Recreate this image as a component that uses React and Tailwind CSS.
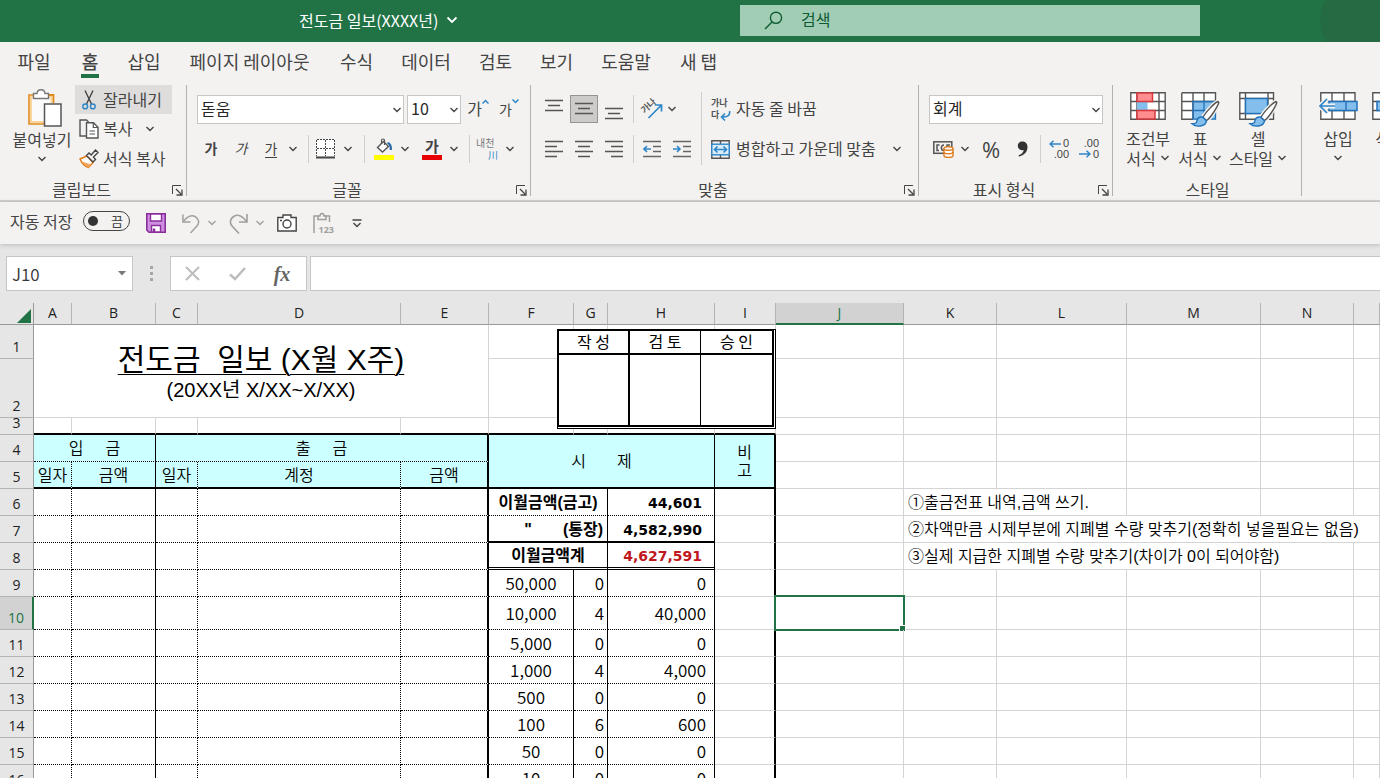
import React from 'react'

const TABS = [
  { label: '파일', width: 'w-[62px]' },
  { label: '홈', width: 'w-[50px]', active: true },
  { label: '삽입', width: 'w-[58px]' },
  { label: '페이지 레이아웃', width: 'w-[153px]' },
  { label: '수식', width: 'w-[61px]' },
  { label: '데이터', width: 'w-[78px]' },
  { label: '검토', width: 'w-[61px]' },
  { label: '보기', width: 'w-[61px]' },
  { label: '도움말', width: 'w-[78px]' },
  { label: '새 탭', width: 'w-[67px]' },
]

const COLUMNS = [
  { name: 'A', width: 'w-[38px]' },
  { name: 'B', width: 'w-[84px]' },
  { name: 'C', width: 'w-[42px]' },
  { name: 'D', width: 'w-[203px]' },
  { name: 'E', width: 'w-[88px]' },
  { name: 'F', width: 'w-[85px]' },
  { name: 'G', width: 'w-[34px]' },
  { name: 'H', width: 'w-[107px]' },
  { name: 'I', width: 'w-[61px]' },
  { name: 'J', width: 'w-[128px]' },
  { name: 'K', width: 'w-[93px]' },
  { name: 'L', width: 'w-[130px]' },
  { name: 'M', width: 'w-[134px]' },
  { name: 'N', width: 'w-[93px]' },
  { name: '', width: '' },
]

const CASH_ROWS = [
  { row: 9, unit: '50,000', count: '0', sum: '0' },
  { row: 10, unit: '10,000', count: '4', sum: '40,000' },
  { row: 11, unit: '5,000', count: '0', sum: '0' },
  { row: 12, unit: '1,000', count: '4', sum: '4,000' },
  { row: 13, unit: '500', count: '0', sum: '0' },
  { row: 14, unit: '100', count: '6', sum: '600' },
  { row: 15, unit: '50', count: '0', sum: '0' },
  { row: 16, unit: '10', count: '0', sum: '0' },
]

// cell borders
const GRID = 'border-r border-b border-[#d4d4d4]'
const DOTTED = 'border-r border-b border-dotted border-black'
const DOTTED_SOLID = 'border-r border-b border-black [border-bottom-style:dotted]'
const DOTTED_THICK = 'border-r-2 border-b border-black [border-bottom-style:dotted]'
const REMARK = 'border-r-2 border-b border-r-black border-b-[#d4d4d4]'

const AMOUNT = "pr-3 text-right font-['DejaVu_Sans'] text-[14px] font-bold"
const FIGURE = "font-['Noto_Sans_CJK_KR',sans-serif] text-[17px] font-[350] leading-[18px]"

const Chevron = ({ className = 'text-[#444]' }) => (
  <svg width="10" height="6" viewBox="0 0 10 6" className={`shrink-0 ${className}`} aria-hidden="true">
    <path d="M1.5 1 L5 4.5 L8.5 1" fill="none" stroke="currentColor" strokeWidth="1.4" />
  </svg>
)

const Drop = ({ width, label, className }) => (
  <button type="button" aria-label={label} className={`flex h-7 shrink-0 items-center justify-center ${width}`}>
    <Chevron className={className} />
  </button>
)

const Tool = ({ width, label, active, children }) => (
  <button
    type="button"
    aria-label={label}
    className={`flex h-7 shrink-0 items-center justify-center whitespace-nowrap ${width} ${
      active ? 'border border-[#979593] bg-[#cdcbc9]' : ''
    }`}
  >
    {children}
  </button>
)

const Sep = ({ className }) => <div className={`w-px shrink-0 bg-[#d0cecc] ${className}`} />

const Launcher = () => (
  <svg width="11" height="11" viewBox="0 0 11 11" fill="none" stroke="#444" aria-hidden="true">
    <path d="M0.5 9 V0.5 H9" />
    <path d="M4 4 L9 9 M10 4.5 V10 H4.5" strokeWidth="1.3" />
  </svg>
)

const Group = ({ width, label, launcher, children }) => (
  <section aria-label={label} className={`relative flex shrink-0 flex-col ${width}`}>
    <div className="flex h-[94px] items-start">{children}</div>
    <div className={`flex h-5 items-center justify-center leading-5 ${launcher ? 'pr-6' : ''}`}>
      <span>{label}</span>
    </div>
    {launcher && (
      <button type="button" aria-label={`${label} 설정`} className="absolute right-1 bottom-1">
        <Launcher />
      </button>
    )}
    <div className="absolute top-0 right-0 h-[111px] w-px bg-[#b3b1af]" />
  </section>
)

const PasteIcon = () => (
  <svg width="36" height="40" viewBox="0 0 36 40" fill="none">
    <path d="M3.5 6.5 H25.5 V35 H3.5 Z" fill="#fafafa" />
    <path d="M7 6 H2 V35 H17" stroke="#e08a1e" strokeWidth="1.6" />
    <path d="M7 8 H4 V33 H17 M20 8 H24.5 V14" stroke="#fbd49a" strokeWidth="2" />
    <path d="M21 6 H26.5 V14" stroke="#e08a1e" strokeWidth="1.8" />
    <path d="M6.5 9.5 V4.5 H10 C10.5 -0.5 17.5 -0.5 18 4.5 H21.5 V9.5 Z" fill="#fff" stroke="#777" strokeWidth="1.4" />
    <path d="M17.5 15 H34 V37 H17.5 Z" fill="#fff" stroke="#555" strokeWidth="1.5" />
  </svg>
)

const CutIcon = () => (
  <svg width="14" height="20" viewBox="0 0 14 20" fill="none">
    <path d="M3 0.5 L9.5 14 M11 0.5 L4.5 14" stroke="#444" strokeWidth="1.4" />
    <circle cx="3.2" cy="16.4" r="2.4" stroke="#2e86c8" strokeWidth="1.4" />
    <circle cx="10.8" cy="16.4" r="2.4" stroke="#2e86c8" strokeWidth="1.4" />
  </svg>
)

const CopyIcon = () => (
  <svg width="20" height="20" viewBox="0 0 20 20" fill="none" stroke="#555" strokeWidth="1.4">
    <path d="M7.5 17 H1 V1 H7.5 L9.5 3" />
    <path d="M7.5 3.8 H14.5 L19 8.3 V19 H7.5 Z" fill="#fff" />
    <path d="M14.3 4 V8.5 H19 M10.5 12 H16 M10.5 15 H16" strokeWidth="1.2" />
  </svg>
)

const BrushIcon = () => (
  <svg width="20" height="20" viewBox="0 0 20 20" fill="none">
    <path d="M1 10 L8 7 L14 13.5 L9.5 18.5 C6 17.5 2.5 13.5 1 10 Z" fill="#fff" stroke="#e07b1c" strokeWidth="1.5" />
    <path d="M3 12.5 L12 15.5 L9.5 18.5 C7 17.5 4.5 15.5 3 12.5 Z" fill="#f2a65a" />
    <path d="M7.5 6.5 L10 4 L12.2 6 L16.5 1 L19 3.5 L14.5 8 L16.5 10.5 L14 13 Z" fill="#f3f2f1" stroke="#444" strokeWidth="1.4" />
  </svg>
)

const BordersIcon = () => (
  <svg width="20" height="20" viewBox="0 0 20 20" fill="none" stroke="#444">
    <path d="M0.5 0.5 H18.5 V17 H0.5 Z" fill="#fff" stroke="none" />
    <path d="M1 0.5 H19 M0.5 1 V17 M9.5 1 V17 M18.5 1 V17 M1 9.5 H19" strokeDasharray="2 1" />
    <path d="M0 18.5 H19" strokeWidth="2" />
  </svg>
)

const FillIcon = () => (
  <svg width="20" height="22" viewBox="0 0 20 22" fill="none">
    <path d="M3.5 9.5 L9.5 3.5 L14.5 8.5 L8.5 14 Z" fill="#fff" stroke="#555" strokeWidth="1.4" />
    <path d="M7.5 6 V2.5 C7.5 0.5 10.5 0.5 10.5 2.5 V7" stroke="#555" strokeWidth="1.2" />
    <path d="M13.5 5 C17 5.5 17 9 16.8 12" stroke="#2468a8" strokeWidth="2.2" />
    <rect y="17" width="20" height="5" fill="#ffff00" />
  </svg>
)

const LINE_SHAPES = {
  top: 'M0 1.5 H18 M3 6.5 H15 M0 11.5 H18',
  middle: 'M0 4.5 H18 M3 9.5 H15 M0 14.5 H18',
  bottom: 'M0 9.5 H18 M3 14.5 H15 M0 19.5 H18',
  left: 'M0 2.5 H18 M0 7.5 H12 M0 12.5 H18 M0 17.5 H12',
  center: 'M0 2.5 H18 M3 7.5 H15 M0 12.5 H18 M3 17.5 H15',
  right: 'M0 2.5 H18 M6 7.5 H18 M0 12.5 H18 M6 17.5 H18',
}

const LinesIcon = ({ kind }) => (
  <svg width="18" height="21" viewBox="0 0 18 21" className="shrink-0">
    <path d={LINE_SHAPES[kind]} stroke="#555" strokeWidth="1.5" />
  </svg>
)

const IndentIcon = ({ more }) => (
  <svg width="18" height="20" viewBox="0 0 18 20" fill="none">
    <path d="M0 2.5 H18 M10 7.5 H18 M10 12.5 H18 M0 17.5 H18" stroke="#666" strokeWidth="1.5" />
    <path d={more ? 'M0 10 H7 M4 7 L7 10 L4 13' : 'M8 10 H1 M4 7 L1 10 L4 13'} stroke="#2e86c8" strokeWidth="1.6" />
  </svg>
)

const OrientationIcon = () => (
  <svg width="22" height="22" viewBox="0 0 22 22" fill="none" className="overflow-visible">
    <text x="2" y="14" fontSize="9" fontWeight="700" fill="#555" transform="rotate(-42 5 13)">가나</text>
    <path d="M7.5 20 L20 7.5 M14 7 H20.5 V13.5" stroke="#2e86c8" strokeWidth="1.7" />
  </svg>
)

const WrapIcon = () => (
  <span className="relative flex h-6 w-5 flex-col text-left text-[9px] leading-3 font-bold text-[#555]">
    <span>가나</span>
    <span>다</span>
    <svg width="11" height="10" viewBox="0 0 11 10" fill="none" className="absolute right-0 bottom-0">
      <path d="M9.5 0 C10.5 5 7 6 2 6 M5 2.5 L1.5 6 L5 9.5" stroke="#2e86c8" strokeWidth="1.6" />
    </svg>
  </span>
)

const MergeIcon = () => (
  <svg width="19" height="19" viewBox="0 0 19 19" fill="none">
    <path d="M0.8 0.8 H18.2 V18.2 H0.8 Z M9.5 1 V4 M9.5 15 V18" stroke="#555" strokeWidth="1.4" />
    <rect x="0.8" y="4.2" width="17.4" height="10.6" fill="#d9ecfa" stroke="#2e86c8" strokeWidth="1.4" />
    <path d="M3.5 9.5 H15.5 M6.5 6.5 L3.5 9.5 L6.5 12.5 M12.5 6.5 L15.5 9.5 L12.5 12.5" stroke="#2e86c8" strokeWidth="1.6" />
  </svg>
)

const CurrencyIcon = () => (
  <svg width="21" height="18" viewBox="0 0 21 18" fill="none">
    <rect x="0.8" y="1.8" width="18" height="11.5" stroke="#555" strokeWidth="1.5" />
    <path d="M6.5 5 H4 V10.5 H6 M11 5 C7.5 5 7.5 10.5 11 10.5 M14 8 V5 H17" stroke="#555" strokeWidth="1.5" />
    <path d="M11 8.5 V15.5 C11 18 20 18 20 15.5 V8.5" fill="#fff" stroke="#e07b1c" strokeWidth="1.4" />
    <ellipse cx="15.5" cy="8.5" rx="4.5" ry="1.8" fill="#fff" stroke="#e07b1c" strokeWidth="1.4" />
    <path d="M11 12 C11 14.3 20 14.3 20 12" stroke="#e07b1c" strokeWidth="1.4" />
  </svg>
)

const DecimalIcon = ({ more }) => (
  <span className="relative flex h-[22px] w-5 flex-col items-end font-['Liberation_Sans'] text-[11px] leading-[11px] text-[#444]">
    <span>{more ? '0' : '.00'}</span>
    <span>{more ? '.00' : '0'}</span>
    <svg
      width="12"
      height="8"
      viewBox="0 0 12 8"
      fill="none"
      className={more ? 'absolute top-0.5 left-0' : 'absolute bottom-0.5 left-0'}
    >
      <path
        d={more ? 'M12 4 H1 M4.5 0.8 L1 4 L4.5 7.2' : 'M0 4 H11 M7.5 0.8 L11 4 L7.5 7.2'}
        stroke="#2e86c8"
        strokeWidth="1.5"
      />
    </svg>
  </span>
)

const ConditionalIcon = () => (
  <svg width="36" height="28" viewBox="0 0 36 28">
    <path d="M0.8 0.8 H35.2 V27.2 H0.8 Z M7 1 V27 M29 1 V27 M1 9.5 H35 M1 18.5 H35" fill="#fff" stroke="#555" strokeWidth="1.4" />
    <rect x="7" y="9.5" width="10.5" height="9" fill="#83beec" />
    <path d="M7 1 H22.5 V9.5 H7 Z M7 18.5 H25 V27 H7 Z" fill="#ff8c8f" stroke="#d8373c" strokeWidth="1.5" />
  </svg>
)

const Paintbrush = () => (
  <g>
    <path d="M36.5 9.5 C33 11 24 21 22 25.5 L25.5 29 C29.5 26 36.5 15 37.8 10.8 Z" fill="#fff" stroke="#f3f2f1" strokeWidth="4" />
    <path d="M37 9.5 C33 11 24 21 22 25.5 L25.5 28.5 C29.5 26 36.5 15 37.8 10.5 Z" fill="#fff" stroke="#555" strokeWidth="1.4" />
    <path d="M21.5 25 C17.5 24.5 16 27 15.8 29.5 C15.5 31.5 13.5 31.8 11 31.8 C15 35.5 24.5 35 25.5 28.8 Z" fill="#83beec" stroke="#2272b9" strokeWidth="1.4" />
  </g>
)

const TableStyleIcon = () => (
  <svg width="39" height="36" viewBox="0 0 39 36">
    <path d="M0.8 0.8 H34.5 V27.2 H0.8 Z" fill="#fff" />
    <path d="M12 10 H34.5 V27.2 H12 Z" fill="#83beec" />
    <path d="M0.8 0.8 H34.5 V9.5 M0.8 0.8 V27.2 H12 M12 1 V27 M23 1 V9.5 M1 9.5 H34 M1 18.5 H12" fill="none" stroke="#555" strokeWidth="1.4" />
    <path d="M12 9.5 H34.5 V27.2 H12 Z M23 10 V27 M12 18.5 H34" fill="none" stroke="#2272b9" strokeWidth="1.3" />
    <Paintbrush />
  </svg>
)

const CellStyleIcon = () => (
  <svg width="39" height="36" viewBox="0 0 39 36">
    <path d="M0.8 0.8 H34.5 V27.2 H0.8 Z M6.5 1 V27 M29 1 V27 M1 6.5 H34 M1 21.5 H34" fill="#fff" stroke="#555" strokeWidth="1.4" />
    <rect x="6.5" y="6.5" width="22" height="15" fill="#83beec" stroke="#2272b9" strokeWidth="1.4" />
    <Paintbrush />
  </svg>
)

const InsertCellsIcon = () => (
  <svg width="40" height="28" viewBox="0 0 40 28" fill="none">
    <path d="M2.8 0.8 H37 V27.2 H2.8 Z M14 1 V27 M26 1 V27 M3 9.5 H37 M3 18.5 H37" fill="#fff" stroke="#555" strokeWidth="1.4" />
    <path d="M11 9.5 H39 V18.5 H11 Z" fill="#83beec" stroke="#2272b9" strokeWidth="1.5" />
    <path d="M28 9.5 V18.5" stroke="#2272b9" strokeWidth="1.4" />
    <path d="M17 14 H2 M9 7 L2 14 L9 21" stroke="#f3f2f1" strokeWidth="5" />
    <path d="M17 14 H2 M9 7 L2 14 L9 21" stroke="#2e86c8" strokeWidth="1.7" />
  </svg>
)

const DeleteCellsIcon = () => (
  <svg width="36" height="28" viewBox="0 0 36 28" fill="none">
    <path d="M0.8 0.8 H33 V27.2 H0.8 Z M10 1 V27 M1 9.5 H33 M1 18.5 H33" fill="#fff" stroke="#555" strokeWidth="1.4" />
    <path d="M5 9.5 H35 V18.5 H5 Z" fill="#83beec" stroke="#2272b9" strokeWidth="1.5" />
  </svg>
)

const BigButton = ({ width, icon, lines }) => (
  <button type="button" className={`flex shrink-0 flex-col items-center whitespace-nowrap ${width}`}>
    <span className="flex h-9 items-start">{icon}</span>
    <span className="leading-5">{lines[0]}</span>
    <span className="flex h-5 items-center gap-1 leading-5">
      {lines[1]}
      <Chevron />
    </span>
  </button>
)

const TitleBar = () => (
  <header className="relative flex h-[42px] shrink-0 items-start overflow-hidden bg-[#217346] text-white">
    <div className="absolute -top-5 -right-10 h-20 w-[100px] rounded-full bg-[#246a42]" />
    <div className="flex h-10 w-[740px] shrink-0 items-center gap-2 pl-[299px]">
      <h1>전도금 일보(XXXX년)</h1>
      <svg width="12" height="8" viewBox="0 0 12 8" fill="none">
        <path d="M1.5 1.5 L6 6 L10.5 1.5" stroke="#fff" strokeWidth="1.8" />
      </svg>
    </div>
    <label className="mt-[5px] flex h-[31px] w-1/3 items-center bg-[#a0cdb4] pl-6">
      <svg width="19" height="19" viewBox="0 0 19 19" fill="none" stroke="#0f5c34" strokeWidth="1.4">
        <circle cx="12" cy="6.8" r="5.6" />
        <path d="M8 11 L1 18" />
      </svg>
      <input
        type="text"
        aria-label="검색"
        placeholder="검색"
        className="ml-[18px] min-w-0 flex-1 bg-transparent pb-1 outline-none placeholder:text-[#0f5c34]"
      />
    </label>
  </header>
)

const TabRow = () => (
  <nav className="flex h-[43px] shrink-0 pl-[3px] text-[18px]">
    {TABS.map((tab) => (
      <button
        type="button"
        key={tab.label}
        className={`flex h-9 shrink-0 flex-col items-center justify-end whitespace-nowrap ${tab.width} ${
          tab.active ? 'font-medium' : ''
        }`}
      >
        <span className="leading-6">{tab.label}</span>
        <span className={`mt-px h-1 w-[18px] ${tab.active ? 'bg-[#217346]' : ''}`} />
      </button>
    ))}
  </nav>
)

const ComboBox = ({ width, label, value }) => (
  <div className={`relative h-[29px] shrink-0 ${width}`}>
    <select
      aria-label={label}
      defaultValue={value}
      className="h-full w-full appearance-none border border-[#c8c6c4] bg-white pb-1 pl-[3px] text-[#262626]"
    >
      <option>{value}</option>
    </select>
    <span className="pointer-events-none absolute top-3 right-0.5 flex h-1.5">
      <Chevron />
    </span>
  </div>
)

const ClipboardGroup = () => (
  <Group width="w-[187px]" label="클립보드" launcher>
    <button type="button" className="ml-2.5 flex w-[64px] flex-col items-center pt-1 whitespace-nowrap">
      <span className="flex h-10 pl-1.5">
        <PasteIcon />
      </span>
      <span className="leading-5">붙여넣기</span>
      <span className="flex h-5 items-center">
        <Chevron />
      </span>
    </button>
    <div className="ml-px flex flex-col">
      <button type="button" className="flex h-[29px] w-[97px] items-center bg-[#dfdddc] pl-[7px]">
        <CutIcon />
        <span className="ml-[7px] pb-0.5">잘라내기</span>
      </button>
      <div className="flex h-[30px] items-center pl-1">
        <button type="button" className="flex items-center">
          <CopyIcon />
          <span className="ml-1 pb-0.5">복사</span>
        </button>
        <Drop width="ml-1.5 w-6" label="복사 옵션" />
      </div>
      <button type="button" className="flex h-[30px] items-center pl-1">
        <BrushIcon />
        <span className="ml-1 pb-0.5 whitespace-nowrap">서식 복사</span>
      </button>
    </div>
  </Group>
)

const FontGroup = () => (
  <Group width="w-[344px]" label="글꼴" launcher>
    <div className="flex flex-col pt-2.5 pl-2.5">
      <div className="flex items-center gap-[3px]">
        <ComboBox width="w-[207px]" label="글꼴" value="돋움" />
        <ComboBox width="w-[54px]" label="글꼴 크기" value="10" />
        <Tool width="w-7" label="글꼴 크기 크게">
          <span className="pb-1 text-[16px]">가</span>
          <svg width="7" height="5" viewBox="0 0 7 5" fill="none" className="mb-4">
            <path d="M0.5 4.5 L3.5 1.5 L6.5 4.5" stroke="#2e86c8" strokeWidth="1.5" />
          </svg>
        </Tool>
        <Tool width="w-7" label="글꼴 크기 작게">
          <span className="pb-0.5 text-[14px]">가</span>
          <svg width="7" height="5" viewBox="0 0 7 5" fill="none" className="mb-4">
            <path d="M0.5 0.5 L3.5 3.5 L6.5 0.5" stroke="#2e86c8" strokeWidth="1.5" />
          </svg>
        </Tool>
      </div>
      <div className="mt-[11px] flex items-center text-[14px]">
        <Tool width="w-7" label="굵게">
          <span className="pb-0.5 font-bold">가</span>
        </Tool>
        <Tool width="w-8" label="기울임꼴">
          <span className="pb-0.5 italic">가</span>
        </Tool>
        <Tool width="w-7" label="밑줄">
          <span className="border-b border-[#444] leading-[17px]">가</span>
        </Tool>
        <Drop width="w-4" label="밑줄 옵션" />
        <Sep className="mx-[7px] h-7" />
        <Tool width="w-5" label="테두리">
          <BordersIcon />
        </Tool>
        <Drop width="w-6" label="테두리 옵션" />
        <Sep className="mr-2 ml-1 h-7" />
        <Tool width="w-[22px]" label="채우기 색">
          <FillIcon />
        </Tool>
        <Drop width="w-5" label="채우기 색 옵션" />
        <Tool width="w-[34px]" label="글꼴 색">
          <span className="flex flex-col items-center">
            <span className="h-[17px] text-[15px] leading-[15px] font-bold">가</span>
            <span className="h-[5px] w-5 bg-[#e80000]" />
          </span>
        </Tool>
        <Drop width="w-2.5" label="글꼴 색 옵션" />
        <Sep className="mr-1.5 ml-2.5 h-7" />
        <Tool width="w-[22px]" label="윗주">
          <span className="flex w-[22px] flex-col text-[10px] leading-3">
            <span className="text-left text-[#777]">내천</span>
            <span className="text-right text-[#2e86c8]">川</span>
          </span>
        </Tool>
        <Drop width="w-6" label="윗주 옵션" />
      </div>
    </div>
  </Group>
)

const AlignGroup = () => (
  <Group width="w-[388px]" label="맞춤" launcher>
    <div className="flex w-[170px] shrink-0 flex-col gap-3 pt-2.5 pl-2">
      <div className="flex items-center">
        <Tool width="w-[30px]" label="위쪽 맞춤">
          <LinesIcon kind="top" />
        </Tool>
        <Tool width="w-7 mx-px" label="가운데 맞춤" active>
          <LinesIcon kind="middle" />
        </Tool>
        <Tool width="w-[30px]" label="아래쪽 맞춤">
          <LinesIcon kind="bottom" />
        </Tool>
        <Sep className="mr-[3px] ml-1 h-7" />
        <Tool width="w-[30px]" label="방향">
          <OrientationIcon />
        </Tool>
        <Drop width="w-2.5" label="방향 옵션" />
      </div>
      <div className="flex items-center">
        <Tool width="w-[30px]" label="왼쪽 맞춤">
          <LinesIcon kind="left" />
        </Tool>
        <Tool width="w-[30px]" label="가로 가운데 맞춤">
          <LinesIcon kind="center" />
        </Tool>
        <Tool width="w-[30px]" label="오른쪽 맞춤">
          <LinesIcon kind="right" />
        </Tool>
        <Sep className="mr-[3px] ml-1 h-7" />
        <Tool width="w-[30px]" label="내어쓰기">
          <IndentIcon />
        </Tool>
        <Tool width="w-[30px]" label="들여쓰기">
          <IndentIcon more />
        </Tool>
      </div>
    </div>
    <Sep className="mt-[7px] h-[73px]" />
    <div className="flex flex-col gap-3 pt-2.5 pl-[9px]">
      <button type="button" className="flex h-7 items-center gap-[5px] whitespace-nowrap">
        <WrapIcon />
        <span className="pb-0.5">자동 줄 바꿈</span>
      </button>
      <div className="flex items-center">
        <button type="button" className="flex h-7 w-[178px] items-center gap-1.5 whitespace-nowrap">
          <MergeIcon />
          <span className="pb-0.5">병합하고 가운데 맞춤</span>
        </button>
        <Drop width="w-4" label="병합 옵션" />
      </div>
    </div>
  </Group>
)

const NumberGroup = () => (
  <Group width="w-[194px]" label="표시 형식" launcher>
    <div className="flex flex-col gap-[11px] pt-2.5 pl-2.5">
      <ComboBox width="w-[174px]" label="표시 형식" value="회계" />
      <div className="flex items-center">
        <Tool width="w-7" label="회계 표시 형식">
          <CurrencyIcon />
        </Tool>
        <Drop width="w-4" label="회계 옵션" />
        <Tool width="w-9" label="백분율 스타일">
          <span className="font-['Open_Sans'] text-[22px]">%</span>
        </Tool>
        <Tool width="w-[26px]" label="쉼표 스타일">
          <svg width="11" height="16" viewBox="0 0 11 16">
            <path d="M5 0.5 C8.5 0.5 10.5 2.5 10.5 6 C10.5 11 7 14.5 2 15.5 L1.5 14.3 C4.5 13.2 6.3 11.5 6.8 9.2 C3.5 9.8 0.8 8 0.8 4.8 C0.8 2.2 2.6 0.5 5 0.5 Z" fill="#333" />
          </svg>
        </Tool>
        <Sep className="mr-[3px] ml-[5px] h-7" />
        <Tool width="w-[30px]" label="자릿수 늘림">
          <DecimalIcon more />
        </Tool>
        <Tool width="w-[30px]" label="자릿수 줄임">
          <DecimalIcon />
        </Tool>
      </div>
    </div>
  </Group>
)

const Ribbon = () => (
  <div className="flex h-[117px] shrink-0 overflow-hidden border-b-2 border-[#d2d0ce]">
    <ClipboardGroup />
    <FontGroup />
    <AlignGroup />
    <NumberGroup />
    <Group width="w-[189px]" label="스타일">
      <div className="flex pt-[7px] pl-[9px]">
        <BigButton width="w-[52px]" icon={<ConditionalIcon />} lines={['조건부', '서식']} />
        <BigButton width="w-[52px]" icon={<TableStyleIcon />} lines={['표', '서식']} />
        <BigButton width="w-16" icon={<CellStyleIcon />} lines={['셀', '스타일']} />
      </div>
    </Group>
    <div className="flex pt-[7px] pl-2.5">
      <BigButton width="w-[52px]" icon={<InsertCellsIcon />} lines={['삽입', '']} />
      <BigButton width="w-[52px]" icon={<DeleteCellsIcon />} lines={['삭제', '']} />
    </div>
  </div>
)

const QuickAccess = () => (
  <div className="relative z-10 flex h-[42px] shrink-0 items-center pl-2.5 shadow-[0_1px_5px_rgba(0,0,0,0.2)]">
    <span id="autosave" className="w-[73px] pb-1 whitespace-nowrap">자동 저장</span>
    <button
      type="button"
      role="switch"
      aria-checked="false"
      aria-labelledby="autosave"
      className="mb-1 flex h-5 w-[47px] items-center justify-between rounded-full border border-[#444] pr-1.5 pl-1 text-[13px]"
    >
      <span className="h-2.5 w-2.5 rounded-full bg-[#333]" />
      <span className="leading-4">끔</span>
    </button>
    <Tool width="w-[52px]" label="저장">
      <svg width="20" height="20" viewBox="0 0 20 20">
        <path d="M0.8 0.8 H19.2 V19.2 H3 L0.8 17 Z" fill="#cf8fe0" stroke="#8a2f9c" strokeWidth="1.6" />
        <path d="M4.5 1 H15.5 V8 H4.5 Z" fill="#fff" stroke="#8a2f9c" strokeWidth="1.4" />
        <path d="M5.5 19 V12.5 H14.5 V19 Z" fill="#fff" stroke="#8a2f9c" strokeWidth="1.4" />
        <path d="M8 15.5 V19" stroke="#8a2f9c" strokeWidth="2.5" />
      </svg>
    </Tool>
    <Tool width="w-[18px]" label="실행 취소">
      <svg width="19" height="21" viewBox="0 0 19 21" fill="none" stroke="#a19f9d" strokeWidth="1.6">
        <path d="M1 1 V9 H9" />
        <path d="M1.5 8.5 C5 3 10 1 14 3.2 C18.5 6 18.5 10.5 15.5 13.5 L9 20.5" />
      </svg>
    </Tool>
    <Drop width="w-6" label="실행 취소 목록" className="text-[#a19f9d]" />
    <Tool width="ml-1 w-[20px]" label="다시 실행">
      <svg width="19" height="21" viewBox="0 0 19 21" fill="none" stroke="#a19f9d" strokeWidth="1.6">
        <path d="M18 1 V9 H10" />
        <path d="M17.5 8.5 C14 3 9 1 5 3.2 C0.5 6 0.5 10.5 3.5 13.5 L10 20.5" />
      </svg>
    </Tool>
    <Drop width="w-6" label="다시 실행 목록" className="text-[#a19f9d]" />
    <Tool width="w-[30px]" label="카메라">
      <svg width="20" height="18" viewBox="0 0 20 18" fill="#fff" stroke="#444" strokeWidth="1.4">
        <path d="M0.8 3.5 H6 V1 H14 V3.5 H19.2 V17 H0.8 Z" />
        <circle cx="10" cy="10" r="4" />
        <path d="M3 6.5 H5" />
      </svg>
    </Tool>
    <Tool width="w-[42px]" label="값 붙여넣기">
      <span className="relative block h-[22px] w-5">
        <svg width="20" height="22" viewBox="0 0 20 22" fill="none" stroke="#a19f9d" strokeWidth="1.5">
          <path d="M5 4 H1 V21 M12 4 H16.5 V10" />
          <path d="M5 7.5 V4 H7 C7 0.5 11 0.5 11 4 H13 V7.5 Z" />
        </svg>
        <span className="absolute -right-px bottom-0 font-['Open_Sans'] text-[9px] leading-[9px] font-bold text-[#a19f9d]">
          123
        </span>
      </span>
    </Tool>
    <Tool width="w-[26px]" label="빠른 실행 도구 모음 사용자 지정">
      <svg width="10" height="9" viewBox="0 0 10 9" fill="none" stroke="#444" strokeWidth="1.4">
        <path d="M0.5 1 H9.5 M1.5 4 L5 7.5 L8.5 4" />
      </svg>
    </Tool>
  </div>
)

const FormulaBar = () => (
  <div className="flex h-[47px] shrink-0 items-end bg-[#e6e6e6] pl-1.5">
    <div className="relative h-[35px] w-[127px] shrink-0">
      <input
        type="text"
        aria-label="이름 상자"
        defaultValue="J10"
        className="h-full w-full border border-[#c6c6c6] bg-white pl-[5px] font-[350] text-[17px] text-[#333] outline-none"
      />
      <svg width="8" height="5" viewBox="0 0 8 5" className="absolute top-[15px] right-[7px]">
        <path d="M0 0 H8 L4 4.5 Z" fill="#777" />
      </svg>
    </div>
    <div className="flex h-[35px] w-[37px] flex-col items-center justify-center gap-[3px]">
      <span className="h-[3px] w-[3px] bg-[#a6a6a6]" />
      <span className="h-[3px] w-[3px] bg-[#a6a6a6]" />
      <span className="h-[3px] w-[3px] bg-[#a6a6a6]" />
    </div>
    <div className="flex h-[35px] w-[137px] shrink-0 items-center border border-[#c6c6c6] bg-white">
      <Tool width="w-[42px]" label="취소">
        <svg width="15" height="15" viewBox="0 0 15 15">
          <path d="M1 1 L14 14 M14 1 L1 14" stroke="#bdbdbd" strokeWidth="2" />
        </svg>
      </Tool>
      <Tool width="w-12" label="입력">
        <svg width="17" height="14" viewBox="0 0 17 14" fill="none">
          <path d="M1 7.5 L6 12 L16 1" stroke="#bdbdbd" strokeWidth="2.6" />
        </svg>
      </Tool>
      <Tool width="w-[42px]" label="함수 삽입">
        <span className="font-['Liberation_Serif'] text-[20px] font-bold text-[#666] italic">fx</span>
      </Tool>
    </div>
    <input
      type="text"
      aria-label="수식 입력줄"
      className="ml-[3px] h-[35px] min-w-0 flex-1 border border-r-0 border-[#c6c6c6] bg-white px-2 outline-none"
    />
  </div>
)

const RowHead = ({ n, active }) => (
  <th
    scope="row"
    className={`border-b pb-1.5 align-bottom font-['Open_Sans'] text-[14px] leading-[10px] font-normal ${
      active
        ? 'border-r-2 border-r-[#217346] border-b-[#b4b4b4] bg-[#d2d2d2] text-[#217346]'
        : 'border-r border-r-[#999] border-b-[#b4b4b4] bg-[#e6e6e6] text-[#222]'
    }`}
  >
    {n}
  </th>
)

const BlankCells = ({ count }) =>
  Array.from({ length: count }, (_, idx) => <td key={idx} className={GRID} />)

// deposit and withdrawal columns, A to E
const LedgerCells = () => (
  <>
    <td className={DOTTED} />
    <td className={DOTTED_SOLID} />
    <td className={DOTTED} />
    <td className={DOTTED} />
    <td className={DOTTED_THICK} />
  </>
)

const SelectionFrame = () => (
  <div className="absolute -top-0.5 -right-0.5 -bottom-0.5 -left-0.5 border-2 border-[#217346]">
    <span className="absolute -right-[3px] -bottom-[3px] h-[7px] w-[7px] border border-white bg-[#217346]" />
  </div>
)

const ApprovalBox = () => (
  <div className="absolute top-[26px] left-[557px] border border-black bg-white pr-px pb-px text-black">
    <table className="w-[216px] table-fixed border-separate border-spacing-0 border-t border-r-2 border-b-2 border-l border-black">
      <thead>
        <tr className="h-6 text-center leading-5">
          <th className="border-r-2 border-b-2 border-black p-0 pb-0.5 font-normal">작 성</th>
          <th className="border-r border-b-2 border-black p-0 pb-0.5 font-normal">검 토</th>
          <th className="border-b-2 border-black p-0 pb-0.5 font-normal">승 인</th>
        </tr>
      </thead>
      <tbody>
        <tr className="h-[70px]">
          <td className="border-r-2 border-black" />
          <td className="border-r border-black" />
          <td />
        </tr>
      </tbody>
    </table>
  </div>
)

const Sheet = () => (
  <main className="min-h-0 flex-1 overflow-hidden bg-[#e6e6e6] pt-3">
    <div className="relative">
      <table className="w-full table-fixed border-separate border-spacing-0 bg-white font-['Liberation_Sans','Noto_Sans_CJK_KR',sans-serif] text-[16px] leading-5 text-black [&_td]:p-0 [&_td]:pt-0.5">
        <colgroup>
          <col className="w-[34px]" />
          {COLUMNS.map((col, idx) => (
            <col key={idx} className={col.width} />
          ))}
        </colgroup>
        <thead className="bg-[#e6e6e6]">
          <tr className="h-[22px] font-['Open_Sans'] text-[14px] leading-4">
            <th className="border-r border-b border-[#999] p-0">
              <svg width="14" height="14" viewBox="0 0 14 14" className="mt-1 mr-0.5 ml-auto block">
                <path d="M14 0 V14 H0 Z" fill="#217346" />
              </svg>
            </th>
            {COLUMNS.map((col, idx) => (
              <th
                key={idx}
                scope="col"
                className={
                  col.name === 'J'
                    ? 'border-r border-b-2 border-r-[#b4b4b4] border-b-[#217346] bg-[#d2d2d2] p-0 font-normal text-[#217346]'
                    : 'border-r border-b border-r-[#b4b4b4] border-b-[#999] p-0 pb-0.5 font-normal text-[#222]'
                }
              >
                {col.name}
              </th>
            ))}
          </tr>
        </thead>
        <tbody>
          <tr className="h-[34px]">
            <RowHead n={1} />
            <td colSpan={5} rowSpan={2} className={`text-center ${GRID}`}>
              <div className="text-[30px] leading-9 whitespace-pre underline decoration-1 underline-offset-4">
                전도금  일보 (X월 X주)
              </div>
              <div className="text-[20px] leading-6">(20XX년 X/XX~X/XX)</div>
            </td>
            <BlankCells count={10} />
          </tr>
          <tr className="h-[59px]">
            <RowHead n={2} />
            <BlankCells count={10} />
          </tr>
          <tr className="h-[17px]">
            <RowHead n={3} />
            {COLUMNS.slice(0, 9).map((col) => (
              <td key={col.name} className="border-r border-b-2 border-r-[#d4d4d4] border-b-black" />
            ))}
            <BlankCells count={6} />
          </tr>
          <tr className="h-[27px] text-center">
            <RowHead n={4} />
            <td colSpan={2} className={`bg-[#ccffff] font-[350] whitespace-pre ${DOTTED_SOLID}`}>입     금</td>
            <td colSpan={3} className={`bg-[#ccffff] font-[350] whitespace-pre ${DOTTED_THICK}`}>출     금</td>
            <td colSpan={3} rowSpan={2} className="border-r border-b-2 border-black bg-[#ccffff] font-[350] whitespace-pre">
              시       제
            </td>
            <td rowSpan={2} className="border-r-2 border-b-2 border-black bg-[#ccffff] leading-[18px] font-[350]">
              비<br />고
            </td>
            <BlankCells count={6} />
          </tr>
          <tr className="h-[27px] bg-[#ccffff] text-center font-[350]">
            <RowHead n={5} />
            <td className="border-r border-b-2 border-black [border-right-style:dotted]">일자</td>
            <td className="border-r border-b-2 border-black">금액</td>
            <td className="border-r border-b-2 border-black [border-right-style:dotted]">일자</td>
            <td className="border-r border-b-2 border-black [border-right-style:dotted]">계정</td>
            <td className="border-r-2 border-b-2 border-black">금액</td>
            {COLUMNS.slice(9).map((col, idx) => (
              <td key={idx} className={`bg-white ${GRID}`} />
            ))}
          </tr>
          <tr className="h-[27px]">
            <RowHead n={6} />
            <LedgerCells />
            <td colSpan={2} className={`text-center font-bold ${DOTTED_SOLID}`}>이월금액(금고)</td>
            <td className={DOTTED_SOLID}>
              <div className={AMOUNT}>44,601</div>
            </td>
            <td className={REMARK} />
            <td className={GRID} />
            <td colSpan={2} className={`font-[350] whitespace-nowrap ${GRID}`}>
              <span className="ml-1">①출금전표 내역,금액 쓰기.</span>
            </td>
            <BlankCells count={3} />
          </tr>
          <tr className="h-[27px]">
            <RowHead n={7} />
            <LedgerCells />
            <td colSpan={2} className="border-r border-b-2 border-black text-right font-bold whitespace-pre">
              <span className="mr-1">"       (통장)</span>
            </td>
            <td className="border-r border-b-2 border-black">
              <div className={AMOUNT}>4,582,990</div>
            </td>
            <td className={REMARK} />
            <td className={GRID} />
            <td colSpan={5} className={`font-[350] whitespace-nowrap ${GRID}`}>
              <span className="ml-1">②차액만큼 시제부분에 지폐별 수량 맞추기(정확히 넣을필요는 없음)</span>
            </td>
          </tr>
          <tr className="h-[27px]">
            <RowHead n={8} />
            <LedgerCells />
            <td colSpan={2} className="border-r border-b-3 border-black text-center font-bold [border-bottom-style:double]">
              이월금액계
            </td>
            <td className="border-r border-b-3 border-black [border-bottom-style:double]">
              <div className={`text-[#c0181c] ${AMOUNT}`}>4,627,591</div>
            </td>
            <td className={REMARK} />
            <td className={GRID} />
            <td colSpan={4} className={`font-[350] whitespace-nowrap ${GRID}`}>
              <span className="ml-1">③실제 지급한 지폐별 수량 맞추기(차이가 0이 되어야함)</span>
            </td>
            <BlankCells count={1} />
          </tr>
          {CASH_ROWS.map((cash) => {
            const selected = cash.row === 10
            return (
              <tr key={cash.row} className={selected ? 'h-[33px]' : 'h-[27px]'}>
                <RowHead n={cash.row} active={selected} />
                <LedgerCells />
                <td className={`pt-0! text-center ${FIGURE} ${DOTTED_SOLID}`}>{cash.unit}</td>
                <td className={`pt-0! text-right ${FIGURE} ${DOTTED_SOLID}`}>
                  <span className="mr-[3px]">{cash.count}</span>
                </td>
                <td className={`pt-0! text-right ${FIGURE} ${DOTTED_SOLID}`}>
                  <span className="mr-2">{cash.sum}</span>
                </td>
                <td className={REMARK} />
                <td className={`relative ${GRID}`}>{selected && <SelectionFrame />}</td>
                <BlankCells count={5} />
              </tr>
            )
          })}
        </tbody>
      </table>
      <ApprovalBox />
    </div>
  </main>
)

const App = () => {
  return (
    <div className="flex h-screen flex-col overflow-hidden bg-[#f3f2f1] font-['Noto_Sans_CJK_KR',sans-serif] text-[16px] leading-5 text-[#444]">
      <TitleBar />
      <TabRow />
      <Ribbon />
      <QuickAccess />
      <FormulaBar />
      <Sheet />
    </div>
  )
}

export default App
